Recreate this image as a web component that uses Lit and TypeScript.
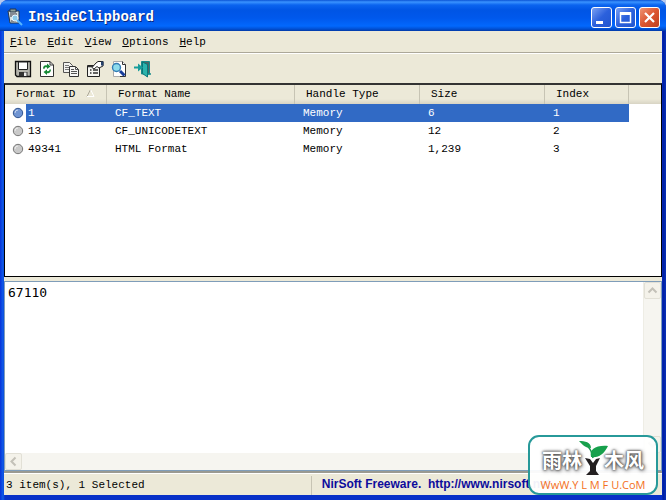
import { LitElement, html, svg, css } from "lit";
import { customElement, state } from "lit/decorators.js";
import { classMap } from "lit/directives/class-map.js";

interface Row {
  id: string;
  name: string;
  handle: string;
  size: string;
  index: number;
}

const rows: Row[] = [
  { id: "1", name: "CF_TEXT", handle: "Memory", size: "6", index: 1 },
  { id: "13", name: "CF_UNICODETEXT", handle: "Memory", size: "12", index: 2 },
  { id: "49341", name: "HTML Format", handle: "Memory", size: "1,239", index: 3 },
];

const menus = ["File", "Edit", "View", "Options", "Help"];

const tools = [
  {
    label: "Save",
    art: svg`<path d="M1.500 1.500H16.500V16.500H3L1.500 15Z" fill="#b4b4ac" stroke="#111" stroke-width="1.300"/>
      <path d="M4.500 2H13.500V9.500H4.500Z" fill="#fff" stroke="#222"/><path d="M5 12H13.500V16.500H5Z" fill="#333"/>
      <path d="M10 12.500H12.500V16H10Z" fill="#eee"/>`,
  },
  {
    label: "Refresh",
    art: svg`<path d="M2.500 1.500H12L15.500 5V16.500H2.500Z" fill="#fff" stroke="#333"/>
      <path d="M12 1.500V5H15.500" fill="none" stroke="#333"/>
      <path d="M5 8.500C5 5.500 7.500 4.500 9 5.500V3.500L12.500 6.500L9 9V7.500C7.500 7 6.500 7.500 6.500 9Z" fill="#158a35"/>
      <path d="M13 9.500C13 12.500 10.500 14 9 13V15L5.500 12L9 9.500V11C10.500 11.500 11.500 11 11.500 9.500Z" fill="#158a35"/>`,
  },
  {
    label: "Copy",
    art: svg`<path d="M1.500 2.500H7.500L10.500 5.500V12.500H1.500Z" fill="#f3f3f0" stroke="#555"/>
      <path d="M3 5.500H7M3 7.500H7M3 9.500H7" stroke="#777"/>
      <path d="M7.500 6.500H13.500L16.500 9.500V16.500H7.500Z" fill="#f6f6f4" stroke="#333"/>
      <path d="M13.500 6.500V9.500H16.500M9 9.500H12M9 11.500H15M9 13.500H15" fill="none" stroke="#555"/>`,
  },
  {
    label: "Properties",
    art: svg`<path d="M1.500 5.500H13.500V16.500H1.500Z" fill="#f6f6f2" stroke="#222"/>
      <path d="M2 6.500H8" stroke="#333" stroke-width="1.500"/>
      <path d="M4 10H5.500M7 10H12M4 13H5.500M7 13H12" stroke="#333" stroke-width="1.300"/>
      <path d="M6 7.500L10 3L12 1.500H17V6L13 8L11 6.500L8 9Z" fill="#fff" stroke="#222"/>
      <path d="M15 1.500H17.500V5.500H15Z" fill="#24416b"/>`,
  },
  {
    label: "Find",
    art: svg`<path d="M3.500 1.500H12.500L15.500 4.500V16.500H3.500Z" fill="#fff" stroke="#aaa"/>
      <path d="M12.500 1.500V4.500H15.500V16.500H10" fill="none" stroke="#333"/>
      <circle cx="6.500" cy="7.500" r="4" fill="#8ddcec" stroke="#347db5" stroke-width="1.400"/>
      <path d="M10 11L14.500 15.500" stroke="#173d9b" stroke-width="3"/>`,
  },
  {
    label: "Exit",
    art: svg`<path d="M7.500 1.500H15.500V14H7.500Z" fill="#4c6668" stroke="#168b8b"/>
      <path d="M8.500 2L13.500 4.500V17L8.500 13.500Z" fill="#2bb3ad" stroke="#0b7679"/>
      <path d="M0 6.500H4V3.500L9 7.500L4 11.500V8.500H0Z" fill="#169d9b"/>
      <path d="M13.500 14H17" stroke="#168b8b" stroke-width="1.500"/>`,
  },
];

@customElement("app-root")
export class AppRoot extends LitElement {
  @state() private selected = 1;

  static styles = css`
    :host {
      display: block;
      height: 100vh;
      background: #b7c9ee;
      color: #000;
      font: 11px/18px "Liberation Mono", monospace;
    }
    * { box-sizing: border-box; }
    button { font: inherit; color: inherit; padding: 0; margin: 0; border: 0; background: none; }
    .window {
      position: relative;
      display: flex;
      flex-direction: column;
      height: 100%;
      padding: 0 4px 5px;
      background: linear-gradient(to right, #0831d9, #0f5ce8 3px, #0831c8 5px, #0831c8 calc(100% - 4px), #001da0 calc(100% - 3px), #0831b8);
      border-radius: 8px 8px 0 0;
      overflow: hidden;
    }
    .title {
      flex: none;
      display: flex;
      align-items: center;
      gap: 4px;
      height: 31px;
      margin: 0 -4px;
      padding: 3px 6px 0 6px;
      color: #fff;
      background: linear-gradient(#0b54d5, #3a93ff 2px, #0b64ef 5px, #0055e5 10px, #0058ec 18px, #0268fd 26px, #0150d4 29px, #0139a6);
    }
    .title h1 { flex: 1; margin: 0; font-size: 14px; line-height: 20px; text-shadow: 1px 1px #0a2a80; }
    .app { width: 18px; height: 18px; }
    .controls { display: flex; gap: 3px; }
    .controls button {
      width: 21px;
      height: 21px;
      border: 1px solid #fff;
      border-radius: 3px;
      background: linear-gradient(135deg, #7ba1f3, #2b60dc 50%, #2256d0);
    }
    .controls .close { background: linear-gradient(135deg, #ee9474, #dc5631 50%, #c04020); }
    .controls svg { display: block; width: 19px; height: 19px; }
    .menu {
      flex: none;
      display: flex;
      gap: 11px;
      height: 22px;
      padding: 2px 6px;
      background: #ece9d8;
      border-bottom: 1px solid #aca899;
    }
    .menu button::first-letter { text-decoration: underline; }
    .tools {
      flex: none;
      display: flex;
      align-items: center;
      gap: 6px;
      height: 30px;
      padding: 0 10px;
      background: #ece9d8;
      border-top: 1px solid #fff;
    }
    .tools button, .tools svg { display: block; width: 18px; height: 18px; }
    .list {
      flex: 193 1 0;
      min-height: 0;
      overflow: hidden;
      background: #fff;
      border: 1px solid #000;
      border-top: 2px solid #333;
    }
    table { width: 100%; table-layout: fixed; border-collapse: separate; border-spacing: 0; }
    .c1 { width: 102px; }
    .c2 { width: 188px; }
    .c3, .c4 { width: 125px; }
    .c5 { width: 84px; }
    th {
      height: 19px;
      padding: 0 0 0 11px;
      text-align: left;
      font-weight: 400;
      line-height: 17px;
      background: linear-gradient(#ece9d8 14px, #d8d4c4);
      box-shadow: inset -1px 0 #c7c4b4;
    }
    th:last-child { box-shadow: none; }
    .sort { width: 9px; height: 8px; margin-left: 11px; }
    td { height: 18px; padding: 0 0 0 8px; line-height: 18px; }
    td:first-child { padding: 0; }
    .key { display: flex; align-items: center; padding-left: 7px; }
    .key svg { flex: none; width: 12px; height: 12px; margin-right: 2px; }
    .key span { flex: 1; padding-left: 2px; }
    .on .key span, .on .fill { color: #fff; background: #316ac5; }
    .split { flex: none; height: 4px; background: #ece9d8; }
    .viewer {
      flex: 190 1 0;
      min-height: 0;
      display: grid;
      grid-template: 1fr 17px / 1fr 18px;
      background: #fff;
      border: 1px solid #7f9db9;
    }
    textarea {
      display: block;
      width: 100%;
      height: 100%;
      margin: 0;
      padding: 2px 3px;
      border: 0;
      outline: 0;
      resize: none;
      overflow: hidden;
      background: none;
      font: 13px/18px "DejaVu Sans Mono", monospace;
    }
    .bar { display: flex; justify-content: space-between; background: #f6f5f0; }
    .down { flex-direction: column; border-left: 1px solid #eeede5; }
    .bar button { width: 17px; height: 17px; border: 1px solid #e2e0d6; border-radius: 2px; background: #f4f2ea; }
    .bar svg { display: block; width: 15px; height: 15px; }
    .corner { background: #ece9d8; }
    .status {
      flex: none;
      display: flex;
      height: 24px;
      padding-top: 3px;
      background: #ece9d8;
      border-top: 2px solid #9a9a91;
      box-shadow: inset 0 1px #fff;
    }
    .status span { flex: 311 1 0; padding-left: 2px; }
    .status div { flex: 347 1 0; min-width: 0; padding-left: 10px; border-left: 1px solid #c7c4b4; white-space: pre; overflow: hidden; }
    .status a { color: #0c0c9c; text-decoration: none; font: bold 12px/15px "Liberation Sans", sans-serif; }
    .mark {
      position: absolute;
      right: 8px;
      bottom: 5px;
      width: 130px;
      height: 60px;
      border: 2px solid #279999;
      border-radius: 11px;
      background: #fffffff0;
      text-align: center;
    }
    .brand {
      display: flex;
      justify-content: center;
      align-items: center;
      height: 40px;
      padding-top: 6px;
      color: #fff;
      font: bold 20px/28px "Noto Sans CJK SC", sans-serif;
      text-shadow: 0 0 2px #444, 0 0 3px #555, 1px 1px 4px #666;
    }
    .brand svg { flex: none; width: 30px; height: 36px; margin: -4px -4px 0; }
    .site { font: 11px/15px "Open Sans", sans-serif; color: #f36f21; white-space: pre; }
  `;

  render() {
    return html`
      <main class="window">
        <header class="title">
          <svg class="app" viewBox="0 0 18 18" aria-hidden="true">
            <path d="M2 3H13V15H4Z" fill="#d7e0dd" stroke="#26364c" />
            <path d="M4 1H10V4H4Z" fill="#8e9f98" stroke="#26364c" />
            <path d="M4 6H11M4 8H8M5 13H10" stroke="#334" />
            <circle cx="9" cy="10" r="3" fill="#8ccbe9" stroke="#e8f4ff" />
            <path d="M11 12L16 17" stroke="#56b5ff" stroke-width="2" />
          </svg>
          <h1>InsideClipboard</h1>
          <div class="controls">
            <button aria-label="Minimize"><svg viewBox="0 0 19 19"><path d="M4 13H11V16H4Z" fill="#fff" /></svg></button>
            <button aria-label="Maximize"><svg viewBox="0 0 19 19"><path d="M4.500 5H14.500V14.500H4.500Z" fill="none" stroke="#fff" stroke-width="1.500" /><path d="M4 4H15V7H4Z" fill="#fff" /></svg></button>
            <button class="close" aria-label="Close"><svg viewBox="0 0 19 19"><path d="M5 5L14 14M14 5L5 14" stroke="#fff" stroke-width="2.200" /></svg></button>
          </div>
        </header>
        <nav class="menu">${menus.map((m) => html`<button>${m}</button>`)}</nav>
        <div class="tools">
          ${tools.map((t) => html`<button aria-label=${t.label}><svg viewBox="0 0 18 18">${t.art}</svg></button>`)}
        </div>
        <section class="list">
          <table>
            <colgroup><col class="c1" /><col class="c2" /><col class="c3" /><col class="c4" /><col class="c5" /><col /></colgroup>
            <thead>
              <tr>
                <th>Format ID<svg class="sort" viewBox="0 0 9 8"><path d="M1 7.500L4.500 0.500" stroke="#aca899" fill="none" /><path d="M4.500 0.500L8 7.500H1" stroke="#fff" fill="none" /></svg></th>
                <th>Format Name</th><th>Handle Type</th><th>Size</th><th>Index</th><th></th>
              </tr>
            </thead>
            <tbody>
              ${rows.map((r) => html`
                <tr class=${classMap({ on: r.index === this.selected })} @click=${() => (this.selected = r.index)}>
                  <td><div class="key">
                    <svg viewBox="0 0 12 12"><circle cx="6" cy="6" r="4.700" fill=${r.index === this.selected ? "#6f94d2" : "#c9c9c9"} stroke=${r.index === this.selected ? "#31548f" : "#777"} /><path d="M3 6A3 3 0 0 1 6 3" fill="none" stroke="#fff" stroke-opacity=".6" /></svg>
                    <span>${r.id}</span></div></td>
                  <td class="fill">${r.name}</td>
                  <td class="fill">${r.handle}</td>
                  <td class="fill">${r.size}</td>
                  <td class="fill">${r.index}</td>
                  <td></td>
                </tr>`)}
            </tbody>
          </table>
        </section>
        <div class="split"></div>
        <section class="viewer">
          <textarea aria-label="Clipboard content" spellcheck="false" .value=${"67110"}></textarea>
          <div class="bar down">
            <button aria-label="Scroll up"><svg viewBox="0 0 15 15"><path d="M3.500 9.500L7.500 5.500L11.500 9.500" fill="none" stroke="#c3c1b8" stroke-width="2" /></svg></button>
            <button aria-label="Scroll down"><svg viewBox="0 0 15 15"><path d="M3.500 5.500L7.500 9.500L11.500 5.500" fill="none" stroke="#c3c1b8" stroke-width="2" /></svg></button>
          </div>
          <div class="bar">
            <button aria-label="Scroll left"><svg viewBox="0 0 15 15"><path d="M9.500 3.500L5.500 7.500L9.500 11.500" fill="none" stroke="#c3c1b8" stroke-width="2" /></svg></button>
            <button aria-label="Scroll right"><svg viewBox="0 0 15 15"><path d="M5.500 3.500L9.500 7.500L5.500 11.500" fill="none" stroke="#c3c1b8" stroke-width="2" /></svg></button>
          </div>
          <div class="corner"></div>
        </section>
        <footer class="status">
          <span>3 item(s), 1 Selected</span>
          <div><a href="http://www.nirsoft.net">NirSoft Freeware.  http://www.nirsoft.net</a></div>
        </footer>
        <aside class="mark">
          <div class="brand">雨林<svg viewBox="0 0 30 36" aria-hidden="true">
            <path d="M7 18L12 19L15 23L18 19L22 18L18 26V31L21 35H8L12 31V26Z" fill="#231f20" />
            <path d="M15 18C14 13 13 9 10 7" fill="none" stroke="#16964a" stroke-width="1.500" />
            <path d="M1 1C7 1 13 2 13 8C7 8 5 5 1 1Z" fill="#17a04c" />
            <path d="M13 17C11 9 18 5 30 6C26 14 21 18 13 17Z" fill="#17a04c" />
          </svg>木风</div>
          <div class="site">WwW.Y L M F U.CoM</div>
        </aside>
      </main>
    `;
  }
}
